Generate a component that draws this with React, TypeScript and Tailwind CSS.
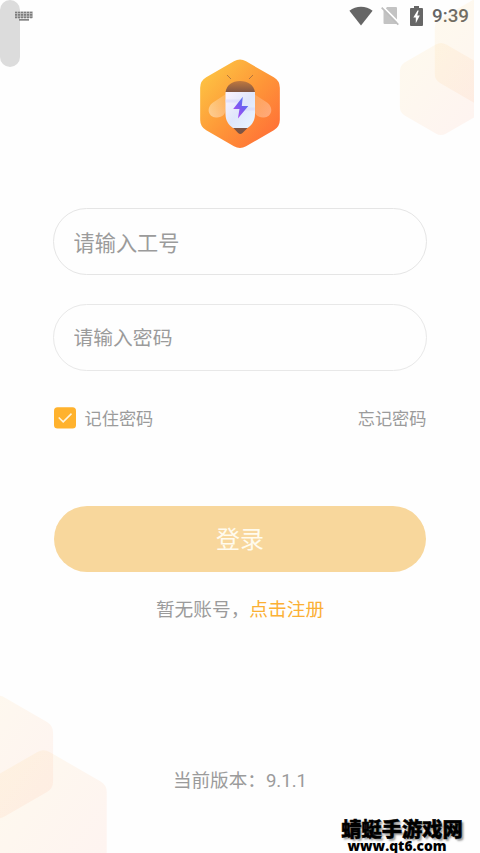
import { useState } from "react";

// pointy-top hexagon with softened corners
function hexPath(cx: number, cy: number, r: number, corner: number) {
  const pts = Array.from({ length: 6 }, (_, i) => {
    const a = (Math.PI / 3) * i - Math.PI / 2;
    return [cx + r * Math.cos(a), cy + r * Math.sin(a)];
  });
  const k = corner / r;
  return (
    pts
      .map(([x, y], i) => {
        const [px, py] = pts[(i + 5) % 6];
        const [nx, ny] = pts[(i + 1) % 6];
        const start = `${x + (px - x) * k} ${y + (py - y) * k}`;
        const end = `${x + (nx - x) * k} ${y + (ny - y) * k}`;
        return `${i === 0 ? "M" : "L"}${start} Q${x} ${y} ${end}`;
      })
      .join(" ") + "Z"
  );
}

function Honeycomb() {
  return (
    <>
      <svg
        className="absolute top-0 right-[6px] h-[140px] w-[80px]"
        viewBox="394 0 80 140"
      >
        <defs>
          <linearGradient id="comb" x1="0" y1="0.1" x2="1" y2="0.9">
            <stop offset="0.2" stopColor="#ffb83c" stopOpacity="0.08" />
            <stop offset="0.85" stopColor="#ff7a45" stopOpacity="0.075" />
          </linearGradient>
        </defs>
        <path d={hexPath(441, 89, 47.5, 6)} fill="url(#comb)" />
        <path d={hexPath(485, 51, 58, 6)} fill="url(#comb)" />
      </svg>
      <svg
        className="absolute bottom-0 left-0 h-[163px] w-[120px]"
        viewBox="0 690 120 163"
      >
        <path d={hexPath(-1.5, 757, 63, 7)} fill="url(#comb)" />
        <path d={hexPath(43.5, 821.5, 73, 7)} fill="url(#comb)" />
      </svg>
    </>
  );
}

function KeyboardIcon() {
  return (
    <svg className="h-[11px] w-[18px]" viewBox="0 0 18 11" fill="none">
      <path d="M0 .5h18v6.500H0z" fill="#c9c9c9" />
      <path
        d="M0 1.500h18M0 3.900h18M0 6.300h18"
        stroke="#7d7d7d"
        strokeWidth="1.700"
        strokeDasharray="2.2 0.8"
      />
      <path d="M4 8.800h10" stroke="#858585" strokeWidth="1.800" />
    </svg>
  );
}

function StatusBar() {
  return (
    <div className="flex h-8 items-center justify-between pl-[15px] pr-[12px]">
      <div className="relative">
        <KeyboardIcon />
      </div>
      <div className="flex items-center">
        <svg className="h-[20px] w-[24px]" viewBox="0 0 24 20" fill="#666">
          <path d="M0.4 4.8C3.8 2.1 7.8 .8 12 .8s8.200 1.300 11.600 4L12 19.500z" />
        </svg>
        <svg className="ml-[8px] h-[20px] w-[18px]" viewBox="0 0 18 20">
          <path
            d="M6 1h9q1 0 1 1v15q0 1-1 1H3.500q-1 0-1-1V5z"
            fill="#c3c3c3"
          />
          <path d="M1.500.3 18.300 17.100" stroke="#fff" strokeWidth="2" />
          <path d="M.7 1.700 17.300 18.700" stroke="#bdbdbd" strokeWidth="1.700" />
        </svg>
        <svg className="ml-[11px] h-[20px] w-[13px]" viewBox="0 0 13 20">
          <path
            d="M4 0h5v2h3q1 0 1 1v16q0 1-1 1H1q-1 0-1-1V3q0-1 1-1h3z"
            fill="#666"
          />
          <path d="M7.500 4.500 3.300 11.500h2.500v5.700L9.800 9.500H7.200l1.500-5z" fill="#fff" />
        </svg>
        <span className="ml-[9px] w-[36px] whitespace-nowrap font-['Roboto',sans-serif] text-[18.800px] font-medium leading-8 text-[#666]">
          9:39
        </span>
      </div>
    </div>
  );
}

function BeeLogo() {
  return (
    <svg
      className="mx-auto mt-[27px] h-[90px] w-[82px]"
      viewBox="199 59 82 90"
    >
      <defs>
        <linearGradient id="logo" x1="0.1" y1="0.1" x2="0.9" y2="0.9">
          <stop offset="0" stopColor="#fdc343" />
          <stop offset="0.5" stopColor="#fe9838" />
          <stop offset="1" stopColor="#ff7037" />
        </linearGradient>
        <linearGradient id="head" x1="0" y1="0" x2="0" y2="1">
          <stop offset="0" stopColor="#c0793f" />
          <stop offset="1" stopColor="#7d5444" />
        </linearGradient>
        <linearGradient id="body" x1="0" y1="0" x2="1" y2="1">
          <stop offset="0" stopColor="#fbf3ff" />
          <stop offset="0.5" stopColor="#dfe6fb" />
          <stop offset="1" stopColor="#e9f6ff" />
        </linearGradient>
        <linearGradient id="bolt" x1="1" y1="0" x2="0.2" y2="1">
          <stop offset="0" stopColor="#4a86f5" />
          <stop offset="0.5" stopColor="#725df0" />
          <stop offset="1" stopColor="#b44af5" />
        </linearGradient>
        <linearGradient id="wingL" x1="1" y1="0" x2="0" y2="1">
          <stop offset="0" stopColor="#fff" stopOpacity="0.15" />
          <stop offset="1" stopColor="#fff" stopOpacity="0.45" />
        </linearGradient>
        <linearGradient id="wingR" x1="0" y1="0" x2="1" y2="1">
          <stop offset="0" stopColor="#fff" stopOpacity="0.15" />
          <stop offset="1" stopColor="#fff" stopOpacity="0.35" />
        </linearGradient>
      </defs>
      <path d={hexPath(240, 103.8, 46, 7)} fill="url(#logo)" />
      <path
        d="M226 94 213 102.500C206 107.500 208 117 216 117.500 222 118 226 114 226 108z"
        fill="url(#wingL)"
      />
      <path
        d="M254 94 267 102.500C274 107.500 272 117 264 117.500 258 118 254 114 254 108z"
        fill="url(#wingR)"
      />
      <path
        d="m227 75 4 4M253 75 249 79"
        stroke="#9a653d"
        strokeWidth="0.9"
        opacity="0.8"
      />
      <path d="M225.500 92.500C226.500 85 232 81 240 81s14 4 15 11.500z" fill="url(#head)" />
      <path d="M233 127.500h15l-5.500 5.500q-2.200 2-4.400 0z" fill="#7d5444" />
      <path
        d="M225.500 92H255v22c0 6.500-3 11-7.500 14h-14.500c-4.500-3-7.500-7.500-7.500-14z"
        fill="url(#body)"
      />
      <path d="M225.500 101H242M240 109h15" stroke="#d8d8fa" strokeWidth="3" opacity="0.6" />
      <path d="M242.800 96.800 233.200 109h6.300l-1.600 9.500L248.300 106h-6.500z" fill="url(#bolt)" />
    </svg>
  );
}

function Checkbox({ checked }: { checked: boolean }) {
  return (
    <svg className="h-[22px] w-[22px]" viewBox="0 0 22 22" fill="none">
      <rect y="0.2" width="22" height="21.400" rx="3.500" fill={checked ? "#ffb22d" : "#ddd"} />
      {checked && (
        <path d="m4.700 10.500 4.500 4.400 8.300-8.300" stroke="#fff4dd" strokeWidth="1.500" />
      )}
    </svg>
  );
}

export default function App() {
  const [remember, setRemember] = useState(true);

  return (
    <div className="relative flex h-[853px] w-[480px] flex-col overflow-hidden bg-[#fefefe] font-['Noto_Sans_CJK_SC',sans-serif] text-[#9b9b9b]">
      <Honeycomb />
      <div className="absolute top-0 left-0 h-[67px] w-[20px] rounded-full bg-[#dcdcdc]" />
      <StatusBar />
      <BeeLogo />

      <div className="mx-[53px] flex flex-col">
        <input
          className="mt-[59px] h-[67px] rounded-full border border-[#e5e5e5] pr-5 pb-px pl-[19.500px] text-[21.2px] placeholder:text-[#9b9b9b] placeholder:opacity-100 focus:outline-none"
          placeholder="请输入工号"
        />
        <input
          type="password"
          className="mt-[29px] h-[67px] rounded-full border border-[#e8e8e8] pr-5 pb-[2px] pl-[19.500px] text-[19.8px] placeholder:text-[#9b9b9b] placeholder:opacity-100 focus:outline-none"
          placeholder="请输入密码"
        />
        <div className="mt-[35px] flex h-[24px] items-center justify-between text-[17.200px] leading-6">
          <button
            className="flex items-center gap-[8.500px] pl-px"
            onClick={() => setRemember(!remember)}
          >
            <Checkbox checked={remember} />
            <span>记住密码</span>
          </button>
          <button className="pr-[0.500px]">忘记密码</button>
        </div>
        <button className="mx-px mt-[76px] h-[66px] rounded-full bg-[#f8d79c] pb-[2px] text-[24px] text-[#fffbee]">
          登录
        </button>
      </div>

      <p className="mt-[22px] text-center text-[18.700px] leading-7">
        暂无账号，<a className="text-[#fbb034]">点击注册</a>
      </p>
      <p className="mt-[143px] text-center text-[18.600px] leading-7">
        当前版本：<span className="font-['Roboto',sans-serif]">9.1.1</span>
      </p>

      <div className="absolute right-[15px] bottom-0 flex w-[126px] flex-col items-center text-black">
        <span className="whitespace-nowrap text-[20.300px] font-black leading-[20px] [-webkit-text-stroke:0.5px_#000] [text-shadow:2px_2px_2px_#999,-1px_-1px_0_#fff,1px_-1px_0_#fff,-1px_1px_0_#fff,1px_1px_0_#fff]">
          蜻蜓手游戏网
        </span>
        <span className="mr-[10px] whitespace-nowrap font-['Open_Sans',sans-serif] text-[13.800px] font-extrabold leading-[15px]">
          www.qt6.com
        </span>
      </div>
    </div>
  );
}
